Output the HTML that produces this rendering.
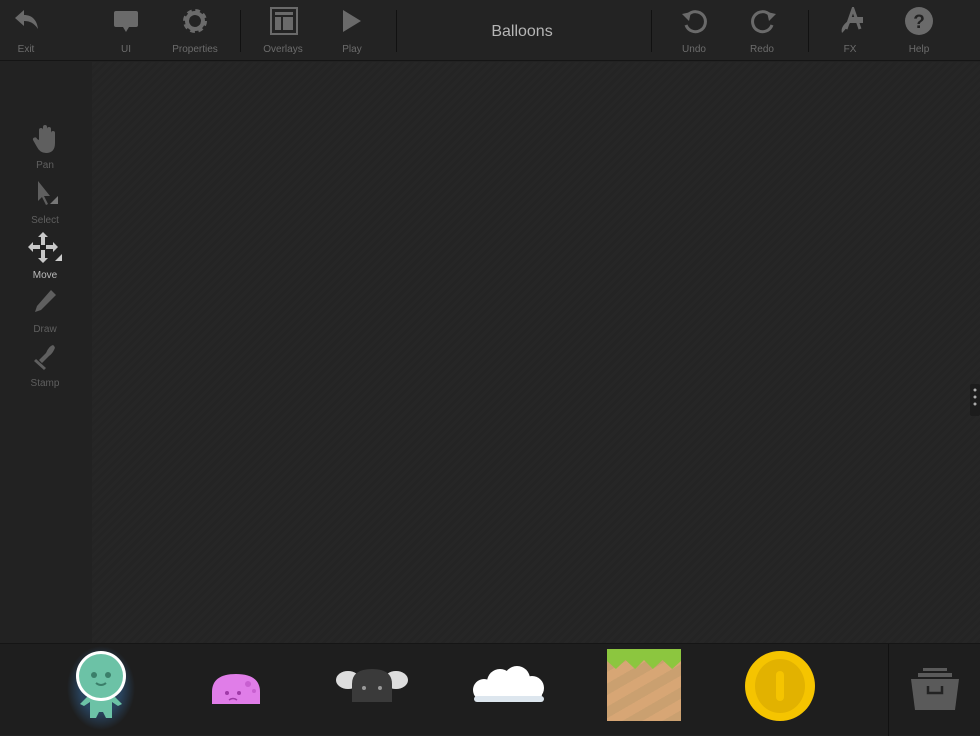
<!DOCTYPE html>
<html><head><meta charset="utf-8"><style>
*{margin:0;padding:0;box-sizing:border-box}
body{width:980px;height:735px;background:#222;font-family:"Liberation Sans",sans-serif;overflow:hidden;position:relative}
.top{position:absolute;left:0;top:0;width:980px;height:61px;background:#232323;border-bottom:1px solid #151515}
.tb{position:absolute;top:0;width:60px;height:61px;text-align:center;color:#6c6c6c;font-size:10px}
.tb svg{position:absolute;left:16px;top:7px}
.tb span{position:absolute;left:0;right:0;top:44px}
.sep{position:absolute;top:10px;width:1px;height:42px;background:#111}
.title{position:absolute;left:422px;width:200px;top:23px;text-align:center;color:#b5b5b5;font-size:16px}
.left{position:absolute;left:0;top:62px;width:92px;height:581px;background:#222}
.canvas{position:absolute;left:92px;top:62px;width:888px;height:581px;background:repeating-linear-gradient(135deg,#262626 0 3px,#242424 3px 6px)}
.lt{position:absolute;left:15px;width:60px;text-align:center;color:#5f5f5f;font-size:10px}
.lt svg{display:block;margin:0 auto 6px}
.bottom{position:absolute;left:0;top:643px;width:980px;height:92px;background:#1e1e1e;border-top:1px solid #151515}
.bsep{position:absolute;left:888px;top:0;width:1px;height:92px;background:#111}
</style></head><body>
<div class="top">
 <div class="tb" style="left:-4px"><svg width="28" height="28" viewBox="0 0 28 28"><path d="M3 11 L12 3 V8 C20 8 25 13 26 22 C22 16 18 14 12 14 V19 Z" fill="#6a6a6a"/></svg><span>Exit</span></div>
 <div class="tb" style="left:96px"><svg width="28" height="28" viewBox="0 0 28 28"><rect x="2" y="4" width="24" height="16" rx="2" fill="#6a6a6a"/><path d="M11 20 L14 25 L17 20Z" fill="#6a6a6a"/></svg><span>UI</span></div>
 <div class="tb" style="left:165px"><svg width="28" height="28" viewBox="0 0 28 28"><circle cx="14" cy="14" r="9" fill="none" stroke="#6a6a6a" stroke-width="6" stroke-dasharray="4 3.07"/><circle cx="14" cy="14" r="8" fill="none" stroke="#6a6a6a" stroke-width="4"/></svg><span>Properties</span></div>
 <div class="sep" style="left:240px"></div>
 <div class="tb" style="left:253px"><svg width="30" height="30" viewBox="0 0 30 30"><rect x="2" y="1" width="26" height="26" fill="none" stroke="#6a6a6a" stroke-width="2"/><rect x="6" y="5" width="18" height="3" fill="#6a6a6a"/><rect x="6" y="10" width="6" height="13" fill="#6a6a6a"/><rect x="14" y="10" width="10" height="13" fill="#6a6a6a"/></svg><span>Overlays</span></div>
 <div class="tb" style="left:322px"><svg width="28" height="28" viewBox="0 0 28 28"><path d="M5 3 L23 14 L5 25Z" fill="#6a6a6a"/></svg><span>Play</span></div>
 <div class="sep" style="left:396px"></div>
 <div class="title">Balloons</div>
 <div class="sep" style="left:651px"></div>
 <div class="tb" style="left:664px"><svg width="30" height="28" viewBox="0 0 30 28"><path d="M8 8 A10 10 0 1 1 6 18" fill="none" stroke="#6a6a6a" stroke-width="3"/><path d="M2 7 L11 5 L9 14Z" fill="#6a6a6a"/></svg><span>Undo</span></div>
 <div class="tb" style="left:732px"><svg width="30" height="28" viewBox="0 0 30 28"><path d="M22 8 A10 10 0 1 0 24 18" fill="none" stroke="#6a6a6a" stroke-width="3"/><path d="M28 7 L19 5 L21 14Z" fill="#6a6a6a"/></svg><span>Redo</span></div>
 <div class="sep" style="left:808px"></div>
 <div class="tb" style="left:820px"><svg width="30" height="28" viewBox="0 0 30 28"><path d="M10 22 L17 2 L24 22" fill="none" stroke="#6a6a6a" stroke-width="3"/><rect x="13" y="10" width="14" height="6" fill="#6a6a6a"/><path d="M6 26 Q4 20 12 14 L14 16 Q10 22 6 26Z" fill="#6a6a6a"/></svg><span>FX</span></div>
 <div class="tb" style="left:889px"><svg width="30" height="30" viewBox="0 0 30 30"><circle cx="14" cy="14" r="14" fill="#6a6a6a"/><text x="14" y="21" text-anchor="middle" font-family="Liberation Sans" font-weight="bold" font-size="19" fill="#232323">?</text></svg><span>Help</span></div>
</div>
<div class="left">
 <div class="lt" style="top:62px"><svg width="28" height="30" viewBox="0 0 28 30"><path d="M8 16 V6 a2 2 0 0 1 4 0 V14 V3 a2 2 0 0 1 4 0 V14 V5 a2 2 0 0 1 4 0 V15 V9 a2 2 0 0 1 4 0 V19 Q24 29 15 29 Q9 29 6 23 L2 16 a2 2 0 0 1 4 -1Z" fill="#5f5f5f"/></svg>Pan</div>
 <div class="lt" style="top:117px"><svg width="36" height="30" viewBox="0 0 36 30"><path d="M11 2 V22 L15 18 L19 26 L21 25 L17 17 L23 17Z" fill="#5f5f5f"/><path d="M31 26 L31 34 L23 34Z" transform="translate(0,-9)" fill="#777"/></svg>Select</div>
 <div class="lt" style="top:170px;color:#bbb"><svg width="36" height="32" viewBox="0 0 36 32"><g fill="#c8c8c8"><path d="M16 0 L21 5 H18 V13 H14 V5 H11Z"/><path d="M16 31 L21 26 H18 V18 H14 V26 H11Z"/><path d="M1 15 L6 10 V13 H13 V17 H6 V20Z"/><path d="M31 15 L26 10 V13 H19 V17 H26 V20Z"/></g><path d="M35 26 V33 H28Z" transform="translate(0,-4)" fill="#ccc"/></svg>Move</div>
 <div class="lt" style="top:226px"><svg width="28" height="30" viewBox="0 0 28 30"><path d="M20 2 L25 7 L10 22 L4 24 L6 18Z" fill="#5f5f5f"/></svg>Draw</div>
 <div class="lt" style="top:280px"><svg width="28" height="30" viewBox="0 0 28 30"><path d="M5 17 L15 26 L13 28 L3 19Z M8 18 L15 11 L18 14 L11 21Z M15 11 Q18 4 22 3 Q25 5 23 8 Q21 12 18 14Z" fill="#5f5f5f"/></svg>Stamp</div>
</div>
<div class="canvas"></div>
<svg style="position:absolute;left:970px;top:384px" width="10" height="32"><rect x="0" y="0" width="10" height="32" rx="2" fill="#1c1c1c"/><circle cx="5" cy="6" r="1.5" fill="#aaa"/><circle cx="5" cy="13" r="1.5" fill="#aaa"/><circle cx="5" cy="20" r="1.5" fill="#aaa"/></svg>
<div class="bottom">
 <svg style="position:absolute;left:66px;top:2px" width="70" height="86" viewBox="0 0 70 86">
  <defs><radialGradient id="g"><stop offset="0.6" stop-color="#2f5a86" stop-opacity=".6"/><stop offset="1" stop-color="#2f5a86" stop-opacity="0"/></radialGradient></defs>
  <ellipse cx="35" cy="42" rx="34" ry="42" fill="url(#g)"/>
  <path d="M22 50 L14 58 L18 60 L24 56 L24 72 L30 72 L33 66 L37 66 L40 72 L46 72 L46 56 L52 60 L56 58 L48 50Z" fill="#6cc2a6"/>
  <circle cx="35" cy="30" r="25" fill="#fff"/><circle cx="35" cy="30" r="22" fill="#6cc2a6"/>
  <circle cx="28" cy="29" r="3" fill="#3b7f6a"/><circle cx="42" cy="29" r="3" fill="#3b7f6a"/>
  <path d="M30 37 Q35 41 40 37" stroke="#3b7f6a" stroke-width="2" fill="none"/>
 </svg>
 <svg style="position:absolute;left:210px;top:28px" width="52" height="34"><path d="M2 32 V20 Q2 2 26 2 Q50 2 50 20 V32Z" fill="#e07de8"/><circle cx="38" cy="12" r="3" fill="#c860d0"/><circle cx="44" cy="19" r="2" fill="#c860d0"/><circle cx="17" cy="21" r="2" fill="#a03aa8"/><circle cx="29" cy="21" r="2" fill="#a03aa8"/><path d="M19 28 Q23 25 27 28" stroke="#a03aa8" stroke-width="1.5" fill="none"/></svg>
 <svg style="position:absolute;left:334px;top:22px" width="76" height="40"><ellipse cx="14" cy="14" rx="12" ry="9" fill="#ddd"/><ellipse cx="62" cy="14" rx="12" ry="9" fill="#ddd"/><path d="M18 36 V18 Q18 3 38 3 Q58 3 58 18 V36Z" fill="#3a3a3a"/><circle cx="30" cy="22" r="2" fill="#999"/><circle cx="46" cy="22" r="2" fill="#999"/></svg>
 <svg style="position:absolute;left:470px;top:22px" width="78" height="40"><g fill="#fff"><circle cx="14" cy="24" r="11"/><circle cx="30" cy="16" r="13"/><circle cx="47" cy="13" r="13"/><circle cx="62" cy="22" r="12"/><rect x="6" y="20" width="66" height="16" rx="8"/></g><rect x="4" y="30" width="70" height="6" rx="3" fill="#dde6ee"/></svg>
 <div style="position:absolute;left:607px;top:5px;width:74px;height:72px;background:repeating-linear-gradient(150deg,#d7a675 0 10px,#caa070 10px 20px)"></div>
 <div style="position:absolute;left:607px;top:5px;width:74px;height:20px;background:#8cc63f;clip-path:polygon(0 0,100% 0,100% 60%,88% 100%,75% 55%,62% 100%,50% 55%,38% 100%,25% 55%,12% 100%,0 60%)"></div>
 <svg style="position:absolute;left:743px;top:5px" width="74" height="74"><ellipse cx="37" cy="37" rx="35" ry="35" fill="#f5c400"/><ellipse cx="37" cy="37" rx="25" ry="27" fill="#e2b200"/><rect x="33" y="22" width="8" height="30" rx="4" fill="#f5c400"/></svg>
 <div class="bsep"></div>
 <svg style="position:absolute;left:909px;top:24px" width="52" height="44"><rect x="14" y="0" width="24" height="3" fill="#5a5a5a"/><rect x="9" y="5" width="34" height="4" fill="#5a5a5a"/><path d="M2 11 H50 L46 42 H6Z" fill="#5a5a5a"/><path d="M19 18 V25 H33 V18" stroke="#222" stroke-width="2.5" fill="none"/></svg>
</div>
</body></html>
